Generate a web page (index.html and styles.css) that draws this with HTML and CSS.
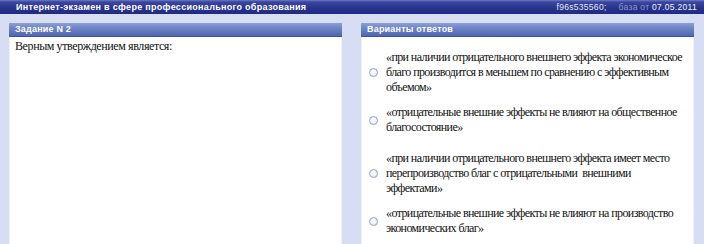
FILE: index.html
```html
<!DOCTYPE html>
<html lang="ru">
<head>
    <meta charset="UTF-8">
    <title>Интернет-экзамен</title>
    <link rel="stylesheet" href="styles.css">
</head>
<body>
    <div class="top-bar">
        <span class="top-title">Интернет-экзамен в сфере профессионального образования</span>
        <span class="top-info">
            <span class="user-id">f96s535560;</span>
            <span class="base-label">база от <b class="base-date">07.05.2011</b></span>
        </span>
    </div>
    <div class="exam">
        <div class="panel">
            <div class="panel-header">Задание N 2</div>
            <div class="panel-body question">Верным утверждением является:</div>
        </div>
        <div class="panel">
            <div class="panel-header">Варианты ответов</div>
            <div class="panel-body answers">
                <div class="answer">
                    <span class="radio"></span>
                    <span class="answer-text">«при наличии отрицательного внешнего эффекта экономическое<br>благо производится в меньшем по сравнению с эффективным<br>объемом»</span>
                </div>
                <div class="answer">
                    <span class="radio"></span>
                    <span class="answer-text">«отрицательные внешние эффекты не влияют на общественное<br>благосостояние»</span>
                </div>
                <div class="answer spaced">
                    <span class="radio"></span>
                    <span class="answer-text">«при наличии отрицательного внешнего эффекта имеет место<br>перепроизводство благ с отрицательными&nbsp; внешними<br>эффектами»</span>
                </div>
                <div class="answer">
                    <span class="radio"></span>
                    <span class="answer-text">«отрицательные внешние эффекты не влияют на производство<br>экономических благ»</span>
                </div>
            </div>
        </div>
    </div>
</body>
</html>
```

FILE: styles.css
```css
/* Base styles */
body {
    margin: 0;
    background: #d7ddf3;
    font-family: "Liberation Serif", "Times New Roman", serif;
    overflow: hidden;
}

/* Top bar */
.top-bar {
    height: 14px;
    display: flex;
    justify-content: space-between;
    align-items: center;
    padding: 0 7px 0 16px;
    background: linear-gradient(#6d79c0 0, #3a46a0 2px, #27328c 60%, #1f2a80 100%);
    font-family: "Liberation Sans", Arial, sans-serif;
    font-size: 9px;
    font-weight: bold;
    color: white;
    letter-spacing: 0.3px;
}

.top-info {
    display: flex;
    gap: 12px;
    font-size: 8.5px;
    font-weight: normal;
    letter-spacing: 0.3px;
}

.user-id {
    color: #e8ebf8;
}

.base-label {
    color: #8e97cb;
}

.base-date {
    color: #f2f4fc;
    font-weight: normal;
}

/* Panels */
.exam {
    display: flex;
    gap: 19px;
    padding: 9px 10px 0 9px;
}

.panel {
    width: 333px;
    height: 221px;
    display: flex;
    flex-direction: column;
    background: white;
}

.panel-header {
    height: 13px;
    line-height: 13px;
    padding-left: 6px;
    background: linear-gradient(#8d9fd6 0, #6f84c6 40%, #5066b0 100%);
    border-bottom: 1px solid #3f529f;
    font-family: "Liberation Sans", Arial, sans-serif;
    font-size: 9px;
    font-weight: bold;
    color: white;
    letter-spacing: 0.2px;
}

.panel-body {
    flex-grow: 1;
    background: white;
    border-left: 1px solid #eef1fb;
    border-right: 1px solid #eef1fb;
}

.question {
    padding: 2px 5px;
    font-size: 12px;
    line-height: 15px;
    letter-spacing: -0.4px;
    color: #111;
}

/* Answers */
.answers {
    padding: 13px 6px 0 6px;
    display: flex;
    flex-direction: column;
    gap: 10px;
}

.answer {
    display: flex;
    align-items: center;
    gap: 8px;
}

.answer.spaced {
    margin-top: 6px;
}

.radio {
    flex-shrink: 0;
    width: 7px;
    height: 7px;
    border: 1px solid #8d9fcc;
    border-radius: 50%;
    background: radial-gradient(circle at 40% 35%, #ffffff, #e3e8f5);
    margin-left: 1px;
}

.answer-text {
    white-space: nowrap;
    font-size: 12px;
    line-height: 15px;
    letter-spacing: -0.6px;
    color: #111;
}
```
